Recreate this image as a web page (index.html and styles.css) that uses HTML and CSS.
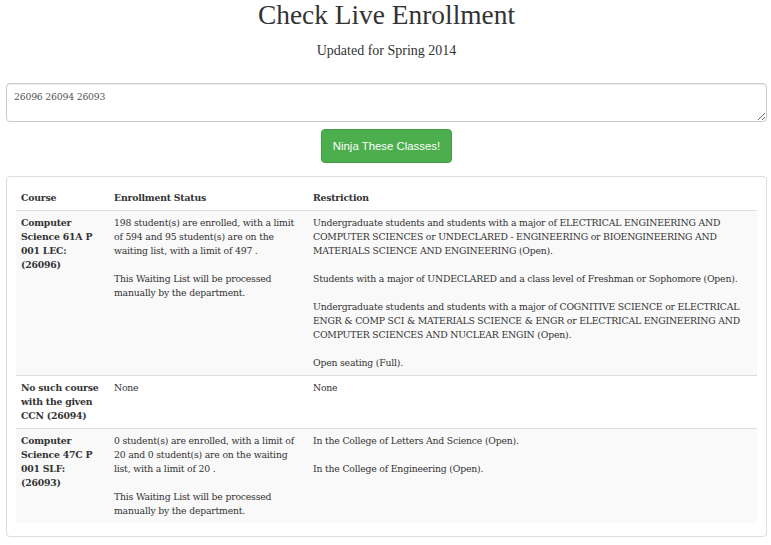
FILE: index.html
```html
<!DOCTYPE html>
<html>
<head>
<meta charset="utf-8">
<title>Check Live Enrollment</title>
<link rel="stylesheet" href="styles.css">
</head>
<body>
<div class="container">
  <h1 class="title">Check Live Enrollment</h1>
  <p class="subtitle">Updated for Spring 2014</p>
  <textarea class="ccn-input">26096 26094 26093</textarea>
  <div class="actions">
    <button class="btn-success">Ninja These Classes!</button>
  </div>
  <div class="panel">
    <table class="results">
      <colgroup>
        <col class="col-course">
        <col class="col-status">
        <col class="col-restrict">
      </colgroup>
      <thead>
        <tr><th>Course</th><th>Enrollment Status</th><th>Restriction</th></tr>
      </thead>
      <tbody>
        <tr class="striped">
          <th>Computer Science 61A P 001 LEC: (26096)</th>
          <td>
            <p>198 student(s) are enrolled, with a limit of 594 and 95 student(s) are on the waiting list, with a limit of 497 .</p>
            <p>This Waiting List will be processed manually by the department.</p>
          </td>
          <td>
            <p>Undergraduate students and students with a major of ELECTRICAL ENGINEERING AND COMPUTER SCIENCES or UNDECLARED - ENGINEERING or BIOENGINEERING AND MATERIALS SCIENCE AND ENGINEERING (Open).</p>
            <p>Students with a major of UNDECLARED and a class level of Freshman or Sophomore (Open).</p>
            <p>Undergraduate students and students with a major of COGNITIVE SCIENCE or ELECTRICAL ENGR &amp; COMP SCI &amp; MATERIALS SCIENCE &amp; ENGR or ELECTRICAL ENGINEERING AND COMPUTER SCIENCES AND NUCLEAR ENGIN (Open).</p>
            <p>Open seating (Full).</p>
          </td>
        </tr>
        <tr>
          <th>No such course with the given CCN (26094)</th>
          <td><p>None</p></td>
          <td><p>None</p></td>
        </tr>
        <tr class="striped">
          <th>Computer Science 47C P 001 SLF: (26093)</th>
          <td>
            <p>0 student(s) are enrolled, with a limit of 20 and 0 student(s) are on the waiting list, with a limit of 20 .</p>
            <p>This Waiting List will be processed manually by the department.</p>
          </td>
          <td>
            <p>In the College of Letters And Science (Open).</p>
            <p>In the College of Engineering (Open).</p>
          </td>
        </tr>
      </tbody>
    </table>
  </div>
</div>
</body>
</html>
```
FILE: styles.css
```css
html, body {
  margin: 0;
  padding: 0;
  background: #fff;
}
body {
  font-family: "DejaVu Serif", Georgia, serif;
  font-size: 9.3px;
  letter-spacing: -0.2px;
  line-height: 14px;
  color: #333;
}
.container {
  padding: 0 4px 0 6px;
}
.title {
  margin: 0;
  font-family: "Liberation Serif", "Times New Roman", serif;
  font-size: 27.4px;
  letter-spacing: 0;
  line-height: 31px;
  font-weight: normal;
  text-align: center;
  color: #333;
}
.subtitle {
  margin: 12px 0 0;
  font-family: "Liberation Serif", "Times New Roman", serif;
  font-size: 14px;
  letter-spacing: 0;
  line-height: 16px;
  text-align: center;
}
.ccn-input {
  display: block;
  box-sizing: border-box;
  width: 100%;
  height: 39px;
  margin-top: 24px;
  padding: 6px 7px;
  border: 1px solid #ccc;
  border-radius: 4px;
  box-shadow: inset 0 1px 1px rgba(0,0,0,0.075);
  font-family: "DejaVu Serif", Georgia, serif;
  font-size: 9.3px;
  letter-spacing: -0.2px;
  line-height: 14px;
  color: #555;
  resize: vertical;
}
.actions {
  display: flex;
  justify-content: center;
  margin-top: 7px;
}
.btn-success {
  box-sizing: border-box;
  height: 34px;
  padding: 8px 11px;
  border: 1px solid #449d44;
  border-radius: 4px;
  background: #4cae4c;
  color: #fff;
  font-family: "Liberation Sans", Arial, sans-serif;
  font-size: 11.4px;
  letter-spacing: 0;
  line-height: 16px;
}
.panel {
  margin-top: 13px;
  padding: 9px 9px 13px;
  border: 1px solid #ddd;
  border-radius: 4px;
  box-shadow: 0 1px 1px rgba(0,0,0,0.05);
}
.results {
  width: 100%;
  border-collapse: collapse;
  table-layout: fixed;
}
.col-course { width: 93px; }
.col-status { width: 199px; }
.results th,
.results td {
  padding: 5px;
  text-align: left;
  vertical-align: top;
}
.results th {
  font-weight: bold;
}
.results thead th {
  border-bottom: 1px solid #ddd;
}
.results tbody tr + tr th,
.results tbody tr + tr td {
  border-top: 1px solid #ddd;
}
.results .striped {
  background: #f9f9f9;
}
.results p {
  margin: 0 0 14px;
}
.results p:last-child {
  margin-bottom: 0;
}
```
